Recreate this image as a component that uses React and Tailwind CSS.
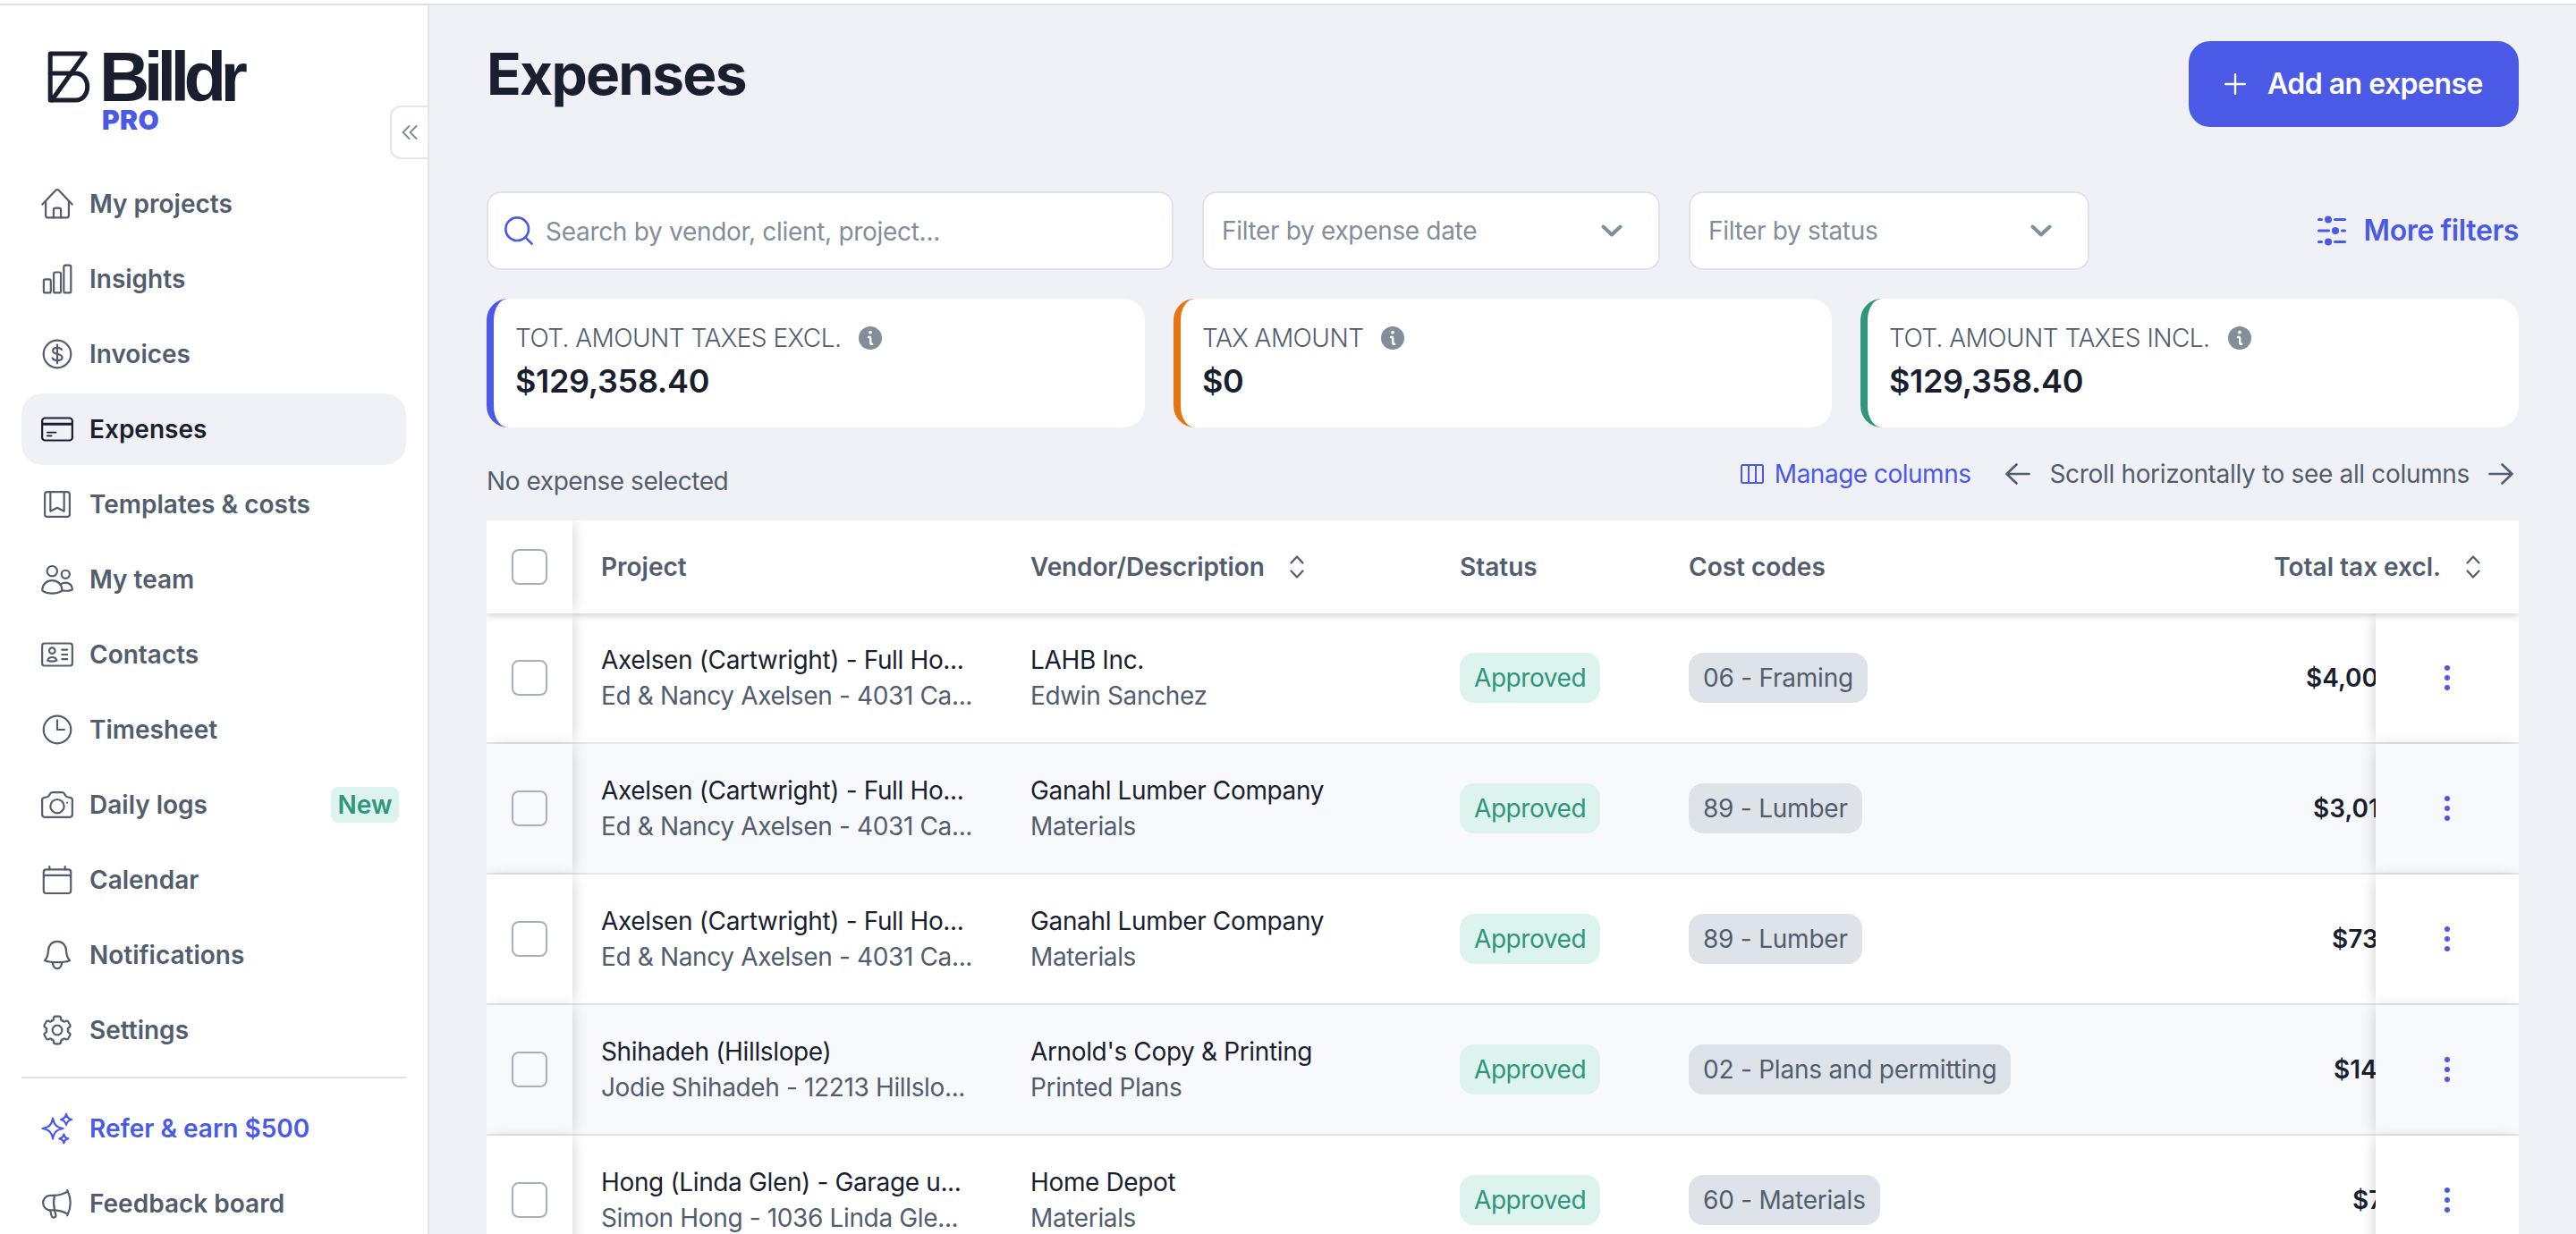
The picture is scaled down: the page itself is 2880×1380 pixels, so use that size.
import React from "react";

const Icon = ({ children, className = "size-9" }) => (
  <svg
    viewBox="0 0 24 24"
    fill="none"
    stroke="currentColor"
    strokeWidth="1.45"
    strokeLinecap="round"
    strokeLinejoin="round"
    className={`${className} shrink-0`}
  >
    {children}
  </svg>
);

const polar = (r, deg) => {
  const a = (deg * Math.PI) / 180;
  return `${(12 + r * Math.cos(a)).toFixed(2)} ${(12 + r * Math.sin(a)).toFixed(2)}`;
};

// Outline of a six-toothed gear with rounded valleys.
const gearPath =
  [0, 1, 2, 3, 4, 5]
    .map((k) => {
      const t = -90 + k * 60;
      return [
        `${k === 0 ? "M" : "L"}${polar(8.5, t - 19)}`,
        `Q${polar(10.5, t - 16)} ${polar(10.3, t - 8)}`,
        `L${polar(10.3, t + 8)}`,
        `Q${polar(10.5, t + 16)} ${polar(8.5, t + 19)}`,
        `Q${polar(7.4, t + 24)} ${polar(8.3, t + 30)}`,
        `Q${polar(7.4, t + 36)} ${polar(8.5, t + 41)}`,
      ].join("");
    })
    .join("") + "Z";

const icons = {
  home: (
    <Icon>
      <path d="M.9 12.4 10.9 1.9a1.5 1.5 0 0 1 2.2 0l10 10.5" />
      <path d="M3.4 10v10.7a1.5 1.5 0 0 0 1.5 1.5h14.2a1.5 1.5 0 0 0 1.5-1.5V10" />
      <path d="M9.3 22.2v-5.7a1.4 1.4 0 0 1 1.4-1.4h2.6a1.4 1.4 0 0 1 1.4 1.4v5.7" />
    </Icon>
  ),
  insights: (
    <Icon>
      <rect x="1.9" y="12.2" width="5.3" height="10.1" rx="1.2" />
      <rect x="9.4" y="7" width="5.3" height="15.3" rx="1.2" />
      <rect x="16.9" y="1.8" width="5.3" height="20.5" rx="1.2" />
    </Icon>
  ),
  invoices: (
    <Icon>
      <circle cx="12" cy="12" r="10.2" />
      <path d="M12 5.1v13.8" />
      <path d="M15.3 8.7c-.6-1-1.8-1.5-3.3-1.5-1.9 0-3.3.9-3.3 2.3 0 3.3 7 1.7 7 4.9 0 1.5-1.5 2.4-3.6 2.4-1.7 0-3.1-.6-3.7-1.8" />
    </Icon>
  ),
  expenses: (
    <Icon>
      <rect x=".75" y="3.65" width="22.5" height="16.7" rx="2.2" />
      <path d="M1 8.1h22" strokeWidth="2" strokeLinecap="butt" />
      <path d="M4.7 14.4h6.3M4.7 16.9h3" strokeWidth="1.3" />
    </Icon>
  ),
  templates: (
    <Icon>
      <rect x="2.75" y="2.75" width="18.5" height="18.5" rx="1.8" />
      <path d="M6.9 2.75v14.4l5.1-2.6 5.1 2.6V2.75" />
    </Icon>
  ),
  team: (
    <Icon>
      <circle cx="8.2" cy="5.8" r="3.8" />
      <circle cx="18.2" cy="8.2" r="3.05" />
      <path d="M.9 19.6c0-3.9 3.2-6.8 7.3-6.8s7.3 2.9 7.3 6.8c.1.5-.1.9-.5 1.1-1.7 1.1-4.1 1.7-6.8 1.7s-5.1-.6-6.8-1.7c-.4-.2-.6-.6-.5-1.1Z" />
      <path d="M14.6 15.5c1-.7 2.2-1.1 3.6-1.1 2.9 0 5 2 5 4.7 0 .4-.2.7-.6.8-1.8.6-4.3.8-7 .4" />
    </Icon>
  ),
  contacts: (
    <Icon>
      <rect x=".75" y="3.65" width="22.5" height="16.7" rx="1.8" />
      <circle cx="8.2" cy="9.1" r="2.2" />
      <path d="M4.8 16.3c.4-1.4 1.7-2.3 3.4-2.3s3 .9 3.4 2.3c-1 .5-2.1.8-3.4.8s-2.4-.3-3.4-.8Z" />
      <path d="M15.5 8.4h4M15.5 12h4M15.5 15.4h4" />
    </Icon>
  ),
  timesheet: (
    <Icon>
      <circle cx="12" cy="12" r="10.2" />
      <path d="M12 4.9V12h5.3" />
    </Icon>
  ),
  camera: (
    <Icon>
      <path d="M.75 8.5a1.8 1.8 0 0 1 1.4-1.8l2.3-.5c.6-.2 1-.5 1.3-1l1-1.5a1.9 1.9 0 0 1 1.6-.9h7.3a1.9 1.9 0 0 1 1.6.9l1 1.5c.3.5.7.8 1.3 1l2.3.5a1.8 1.8 0 0 1 1.4 1.8v10.9a1.8 1.8 0 0 1-1.8 1.8H2.55a1.8 1.8 0 0 1-1.8-1.8Z" />
      <circle cx="12" cy="13.1" r="5.1" />
      <circle cx="19.3" cy="10.4" r=".7" fill="currentColor" stroke="none" />
    </Icon>
  ),
  calendar: (
    <Icon>
      <rect x="1.85" y="4.3" width="20.3" height="17.7" rx="2" />
      <path d="M2 10c0-.9.6-1.4 1.4-1.4h17.2c.8 0 1.4.5 1.4 1.4M6.2 2v2.3M17.8 2v2.3" />
    </Icon>
  ),
  bell: (
    <Icon>
      <path d="M12 1.9C8 1.9 5.5 4.9 5.3 8.7c-.2 3.9-.7 5.4-2.6 7.4 2.5.9 5.8 1.3 9.3 1.3s6.8-.4 9.3-1.3c-1.9-2-2.4-3.5-2.6-7.4-.2-3.8-2.7-6.8-6.7-6.8Z" />
      <path d="M8.5 17.4c0 2.6 1.5 4.7 3.5 4.7s3.5-2.1 3.5-4.7" />
    </Icon>
  ),
  settings: (
    <Icon>
      <path d={gearPath} />
      <circle cx="12" cy="12" r="3.6" />
    </Icon>
  ),
  sparkles: (
    <Icon>
      <path d="M8.7 4.3c.9 5 2.7 6.8 7.7 7.7-5 .9-6.8 2.7-7.7 7.7-.9-5-2.7-6.8-7.7-7.7 5-.9 6.8-2.7 7.7-7.7Z" />
      <path d="M18.7 1.2c.5 2.6 1.5 3.6 4.1 4.1-2.6.5-3.6 1.5-4.1 4.1-.5-2.6-1.5-3.6-4.1-4.1 2.6-.5 3.6-1.5 4.1-4.1Z" />
      <path d="M16.9 16.3c.4 2.1 1.2 2.9 3.3 3.3-2.1.4-2.9 1.2-3.3 3.3-.4-2.1-1.2-2.9-3.3-3.3 2.1-.4 2.9-1.2 3.3-3.3Z" />
    </Icon>
  ),
  megaphone: (
    <Icon>
      <path d="M10 5.9H6.9a5.5 5.5 0 0 0 0 11H10c-.8-3.6-.8-7.3 0-11Z" />
      <path d="M10 5.9c3.8-.2 7-1.2 9.6-2.8M10 16.9c3.8.2 7 1.2 9.6 2.8" />
      <path d="M19.5 2c3.1 6.2 3.1 12.5 0 18.9" />
      <path d="m6.7 17 1.1 4.2a1.6 1.6 0 0 0 3.1-.8l-.9-3.4" />
    </Icon>
  ),
};

const NavItem = ({ icon, label, active, accent, badge }) => {
  const tone = active
    ? "bg-[#f0f1f6] text-[#1a1f2f]"
    : accent
      ? "text-[#4a5ae6]"
      : "text-[#525d6e]";
  return (
    <a className={`flex h-20 shrink-0 items-center rounded-[24px] pr-2 pl-[22px] text-[28px] font-semibold ${tone}`}>
      {icons[icon]}
      <span className="ml-[18px]">{label}</span>
      {badge && (
        <span className="ml-auto flex h-10 w-[76px] items-center justify-center rounded-lg bg-[#dcf3ee] text-[#2f957b]">
          {badge}
        </span>
      )}
    </a>
  );
};

const nav = [
  { icon: "home", label: "My projects" },
  { icon: "insights", label: "Insights" },
  { icon: "invoices", label: "Invoices" },
  { icon: "expenses", label: "Expenses", active: true },
  { icon: "templates", label: "Templates & costs" },
  { icon: "team", label: "My team" },
  { icon: "contacts", label: "Contacts" },
  { icon: "timesheet", label: "Timesheet" },
  { icon: "camera", label: "Daily logs", badge: "New" },
  { icon: "calendar", label: "Calendar" },
  { icon: "bell", label: "Notifications" },
  { icon: "settings", label: "Settings" },
];

const Logo = () => (
  <div className="flex h-[110px] shrink-0 pl-[53px]">
    <svg viewBox="0 0 48 58" className="mt-[6px] h-[58px] w-12 shrink-0" fill="none" stroke="#1a1f2f" strokeWidth="5" strokeLinejoin="round" strokeLinecap="round">
      <path d="M3.2 55V3h39L5 55Z" />
      <path d="M3.2 25h28.500c7.600 0 13 6.800 13 15s-5.400 15-13 15H5" />
    </svg>
    <div className="ml-[10px] flex flex-col">
      <span className="mt-[5px] h-[60px] font-['Liberation_Sans',sans-serif] text-[78px] leading-[60px] font-bold tracking-[-6.7px] text-[#1a1f2f]">
        Billdr
      </span>
      <span className="ml-[3px] text-[30px] leading-[36px] font-black tracking-[0.4px] text-[#4a5ae6]">PRO</span>
    </div>
  </div>
);

const Sidebar = () => (
  <aside className="relative flex w-[480px] shrink-0 flex-col border-r-2 border-[#e5e6ec] bg-white pt-[45px]">
    <Logo />
    <button className="absolute top-[112px] right-0 flex h-[60px] w-[42px] items-center rounded-l-xl border-2 border-r-0 border-[#e5e6ec] pl-[11px] text-[#838e9b]">
      <svg viewBox="0 0 18 16" className="h-4 w-[18px]" fill="none" stroke="currentColor" strokeWidth="2" strokeLinecap="round" strokeLinejoin="round">
        <path d="M8.5 1 1.5 8l7 7M16.5 1l-7 7 7 7" />
      </svg>
    </button>
    <nav className="mt-[27px] flex shrink-0 flex-col gap-1 px-6">
      {nav.map((n) => (
        <NavItem key={n.label} {...n} />
      ))}
      <hr className="mt-2 mb-3 border-t-2 border-[#dee2e9]" />
      <NavItem icon="sparkles" label="Refer & earn $500" accent />
      <NavItem icon="megaphone" label="Feedback board" />
    </nav>
  </aside>
);

const Chevron = () => (
  <svg viewBox="0 0 24 14" className="ml-auto h-3.5 w-6" fill="none" stroke="#838e9b" strokeWidth="4" strokeLinecap="round" strokeLinejoin="round">
    <path d="m2.5 2.500 9.500 9 9.500-9" />
  </svg>
);

const SelectBox = ({ label, className }) => (
  <div className={`flex h-[88px] items-center rounded-2xl border-2 border-[#dee2e9] bg-white pr-10 pl-5 text-[28px] tracking-[-0.33px] text-[#838e9b] ${className}`}>
    {label}
    <Chevron />
  </div>
);

const InfoIcon = () => (
  <svg viewBox="0 0 26 26" className="size-[26px]">
    <circle cx="13" cy="13" r="13" fill="#838e9b" />
    <circle cx="13" cy="6.6" r="1.9" fill="#fff" />
    <path d="M11 12h1.200a1 1 0 0 1 1 1v5.200a1.600 1.600 0 0 0 1.600 1.600h.4" fill="none" stroke="#fff" strokeWidth="2.4" strokeLinecap="round" />
  </svg>
);

const Card = ({ title, value, border }) => (
  <div className={`h-36 flex-1 rounded-[24px] border-l-8 bg-white px-6 pt-6 ${border}`}>
    <div className="flex h-10 items-center gap-5 text-[28px] font-light tracking-[-0.52px] text-[#525d6e]">
      {title}
      <InfoIcon />
    </div>
    <div className="text-[36px] leading-[56px] font-semibold tracking-[-0.33px] text-[#1a1f2f]">{value}</div>
  </div>
);

const Arrow = ({ flip }) => (
  <svg viewBox="0 0 28 24" className={`h-6 w-7 ${flip ? "-scale-x-100" : ""}`} fill="none" stroke="currentColor" strokeWidth="2.6" strokeLinecap="round" strokeLinejoin="round">
    <path d="M1.5 12h25M15.5 1.5 26.5 12l-11 10.500" />
  </svg>
);

const Sort = () => (
  <svg viewBox="0 0 16 26" className="h-[26px] w-4" fill="none" stroke="#525d6e" strokeWidth="2.2" strokeLinecap="round" strokeLinejoin="round">
    <path d="m1.5 8.500 6.500-7 6.500 7M1.500 17.500l6.500 7 6.500-7" />
  </svg>
);

const Checkbox = () => <span className="block size-10 rounded-lg border-2 border-[#a9b0bb]" />;

const rows = [
  { project: "Axelsen (Cartwright) - Full Ho...", client: "Ed & Nancy Axelsen - 4031 Ca...", vendor: "LAHB Inc.", desc: "Edwin Sanchez", code: "06 - Framing", total: "$4,00", pad: "pl-[178px]" },
  { project: "Axelsen (Cartwright) - Full Ho...", client: "Ed & Nancy Axelsen - 4031 Ca...", vendor: "Ganahl Lumber Company", desc: "Materials", code: "89 - Lumber", total: "$3,01", pad: "pl-[186px]" },
  { project: "Axelsen (Cartwright) - Full Ho...", client: "Ed & Nancy Axelsen - 4031 Ca...", vendor: "Ganahl Lumber Company", desc: "Materials", code: "89 - Lumber", total: "$73", pad: "pl-[207px]" },
  { project: "Shihadeh (Hillslope)", client: "Jodie Shihadeh - 12213 Hillslo...", vendor: "Arnold's Copy & Printing", desc: "Printed Plans", code: "02 - Plans and permitting", total: "$14", pad: "pl-[209px]" },
  { project: "Hong (Linda Glen) - Garage u...", client: "Simon Hong - 1036 Linda Gle...", vendor: "Home Depot", desc: "Materials", code: "60 - Materials", total: "$7", pad: "pl-[230px]" },
];

const TwoLine = ({ top, bottom }) => (
  <div className="flex w-[480px] shrink-0 flex-col justify-center pl-8 leading-10 tracking-[-0.36px] whitespace-nowrap">
    <span className="text-[#1a1f2f]">{top}</span>
    <span className="text-[#525d6e]">{bottom}</span>
  </div>
);

const Row = ({ r, even }) => {
  const bg = even ? "bg-[#f8f9fd]" : "bg-white";
  return (
    <div className={`flex h-[146px] text-[28px] ${bg}`}>
      <div className={`relative flex w-24 shrink-0 items-center justify-center border-b-2 border-[#e4e5ec] shadow-[4px_0_16px_-4px_rgba(0,0,0,0.2)] ${bg}`}>
        <Checkbox />
      </div>
      <div className="flex min-w-0 flex-1 overflow-hidden border-b-2 border-[#e4e5ec]">
        <TwoLine top={r.project} bottom={r.client} />
        <TwoLine top={r.vendor} bottom={r.desc} />
        <div className="flex w-64 shrink-0 items-center pl-8">
          <span className="flex h-14 items-center rounded-2xl bg-[#dcf3ee] px-4 tracking-[-0.43px] text-[#2f957b]">Approved</span>
        </div>
        <div className="flex w-[544px] shrink-0 items-center pl-8">
          <span className="flex h-14 items-center rounded-2xl bg-[#dee2e9] px-4 tracking-[-0.23px] text-[#525d6e]">{r.code}</span>
        </div>
        <div className={`flex items-center font-semibold text-[#1a1f2f] ${r.pad}`}>{r.total}</div>
      </div>
      <div className={`relative flex w-40 shrink-0 flex-col items-center justify-center gap-[5px] border-b-2 border-[#e4e5ec] shadow-[-4px_0_16px_-4px_rgba(0,0,0,0.2)] ${bg}`}>
        <span className="size-[6px] rounded-full bg-[#4a5ae6]" />
        <span className="size-[6px] rounded-full bg-[#4a5ae6]" />
        <span className="size-[6px] rounded-full bg-[#4a5ae6]" />
      </div>
    </div>
  );
};

const Table = () => (
  <div className="overflow-hidden">
    <div className="relative z-10 flex h-[104px] items-center bg-white text-[28px] font-semibold text-[#525d6e] shadow-[0_2px_8px_rgba(0,0,0,0.2)]">
      <div className="h-full w-24 shrink-0">
        <div className="flex h-full items-center justify-center shadow-[4px_0_16px_-4px_rgba(0,0,0,0.2)] [clip-path:inset(0_-24px_0_0)]">
          <Checkbox />
        </div>
      </div>
      <div className="w-[480px] pl-8">Project</div>
      <div className="flex w-[480px] items-center gap-7 pl-8 tracking-[-0.12px]">
        Vendor/Description
        <Sort />
      </div>
      <div className="w-64 pl-8">Status</div>
      <div className="pl-8">Cost codes</div>
      <div className="mr-[43px] ml-auto flex items-center gap-7">
        Total tax excl.
        <Sort />
      </div>
    </div>
    {rows.map((r, i) => (
      <Row key={i} r={r} even={i % 2 === 1} />
    ))}
  </div>
);

export default function App() {
  return (
    <div className="flex h-[1380px] w-[2880px] flex-col overflow-hidden bg-white font-[Inter,sans-serif]">
      <div className="h-1.5 shrink-0 border-b-2 border-[#e0e0e2]" />
      <div className="flex min-h-0 flex-1 overflow-hidden">
        <Sidebar />
        <main className="min-w-0 flex-1 bg-[#f0f1f6] px-16 pt-10">
          <header className="flex h-24 justify-between">
            <h1 className="text-[64px] leading-[74px] font-bold tracking-[-1.8px] text-[#1a1f2f]">Expenses</h1>
            <button className="flex h-24 items-center rounded-[24px] bg-[#4a5ae6] px-10 text-[32px] font-semibold tracking-[-0.52px] text-white">
              <svg viewBox="0 0 24 24" className="mr-6 size-6" fill="none" stroke="currentColor" strokeWidth="2.4" strokeLinecap="round">
                <path d="M12 1.200v21.600M1.200 12h21.600" />
              </svg>
              Add an expense
            </button>
          </header>
          <div className="mt-[72px] flex items-center gap-8">
            <div className="flex h-[88px] w-[768px] items-center rounded-2xl border-2 border-[#dee2e9] bg-white pl-[18px] text-[28px] tracking-[-0.3px] text-[#838e9b]">
              <svg viewBox="0 0 32 32" className="mr-[14px] size-8" fill="none" stroke="#4a5ae6" strokeWidth="2.7" strokeLinecap="round">
                <circle cx="14.2" cy="14.2" r="12.8" />
                <path d="m23.4 23.400 7.200 7.200" />
              </svg>
              <span className="pt-0.5">Search by vendor, client, project...</span>
            </div>
            <SelectBox label="Filter by expense date" className="w-[512px]" />
            <SelectBox label="Filter by status" className="w-[448px]" />
            <button className="ml-auto flex items-center gap-5 text-[32px] font-semibold tracking-[-0.38px] text-[#4a5ae6]">
              <svg viewBox="0 0 32 36" className="h-9 w-8" fill="none" stroke="currentColor" strokeWidth="3" strokeLinecap="round">
                <path d="M1.5 5.500h3M19.500 5.500h11M1.500 18h11M27.500 18h3M1.500 30.500h3M19.500 30.500h11" />
                <g fill="currentColor" stroke="none">
                  <circle cx="12" cy="5.5" r="4" />
                  <circle cx="20" cy="18" r="4" />
                  <circle cx="12" cy="30.5" r="4" />
                </g>
              </svg>
              More filters
            </button>
          </div>
          <div className="mt-8 flex gap-8">
            <Card title="TOT. AMOUNT TAXES EXCL." value="$129,358.40" border="border-[#4a5ae6]" />
            <Card title="TAX AMOUNT" value="$0" border="border-[#e47714]" />
            <Card title="TOT. AMOUNT TAXES INCL." value="$129,358.40" border="border-[#2f957b]" />
          </div>
          <div className="flex h-[104px] items-center text-[28px] tracking-[-0.33px] text-[#525d6e]">
            <span className="pt-4 tracking-[-0.42px]">No expense selected</span>
            <span className="ml-auto flex items-center gap-3 tracking-[-0.5px] text-[#4a5ae6]">
              <svg viewBox="0 0 26 22" className="h-[22px] w-[26px]" fill="none" stroke="currentColor" strokeWidth="2">
                <rect x="1" y="1" width="24" height="20" rx="1.5" />
                <path d="M9 1v20M17 1v20" />
              </svg>
              Manage columns
            </span>
            <span className="mr-[6px] ml-[39px] flex items-center gap-[21px]">
              <Arrow flip />
              Scroll horizontally to see all columns
              <Arrow />
            </span>
          </div>
          <Table />
        </main>
      </div>
    </div>
  );
}
